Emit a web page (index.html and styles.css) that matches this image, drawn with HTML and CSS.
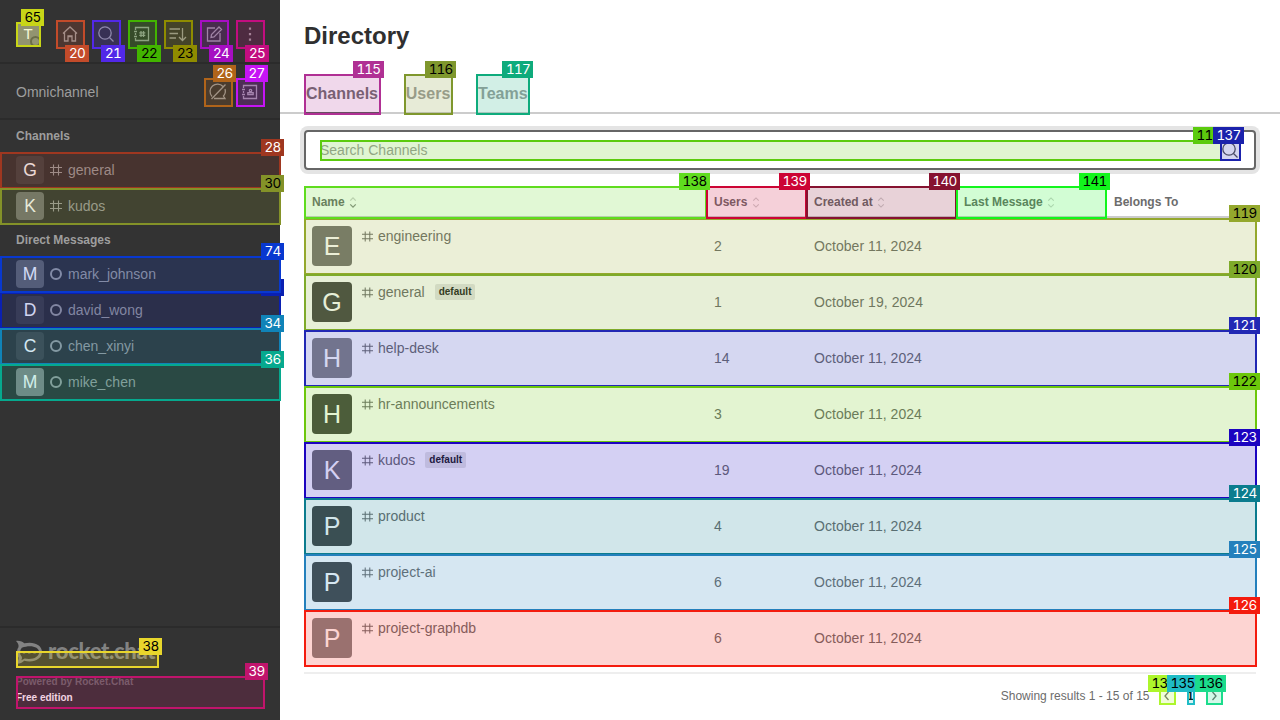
FILE: index.html
```html
<!DOCTYPE html>
<html lang="en">
<head>
<meta charset="utf-8">
<title>Directory</title>
<link rel="stylesheet" href="styles.css">
</head>
<body>
<svg class="defs" width="0" height="0">
  <symbol id="hash" viewBox="0 0 12 12"><path d="M3.500 .5v11M8.500 .5v11M0 3.500h12M0 8.500h12"/></symbol>
  <symbol id="search" viewBox="0 0 20 20"><circle cx="9" cy="9" r="6.2"/><path d="M13.500 13.500l4 4"/></symbol>
  <symbol id="sort" viewBox="0 0 8 12"><path class="up" d="M1 4l3-3 3 3"/><path class="down" d="M1 8l3 3 3-3"/></symbol>
</svg>
<div class="app">
  <aside class="sidebar">
    <header class="topbar">
      <div class="me">T<i class="status"></i><b class="mark m65"></b><em class="tag m65 dark">65</em></div>
      <div class="tools">
        <div class="btn"><svg viewBox="0 0 20 20"><path d="M3 9.500L10 3l7 6.500M4.500 8.500V17H8v-4.500h4V17h3.500V8.500M8 17v-5h4v5"/></svg><b class="mark m20"></b><em class="tag low m20">20</em></div>
        <div class="btn"><svg><use href="#search"/></svg><b class="mark m21"></b><em class="tag low m21">21</em></div>
        <div class="btn"><svg viewBox="0 0 20 20"><path d="M3.500 6V3.500h13v13h-13V14M3.500 9v2M2 7.500h3M2 12.500h3M9 7v6M11.500 7v6M7.300 8.800h6M7.300 11.300h6"/></svg><b class="mark m22"></b><em class="tag low m22 dark">22</em></div>
        <div class="btn"><svg viewBox="0 0 20 20"><path d="M1.500 5H12M1.500 9.500H10M1.500 14H8M14.500 4v12.500M11 13l3.500 3.500L18 13"/></svg><b class="mark m23"></b><em class="tag low m23 dark">23</em></div>
        <div class="btn"><svg viewBox="0 0 20 20"><path d="M11 4H3.500v13H16V9M7 13.500l.5-3L15 3l2.500 2.500L10 13z"/></svg><b class="mark m24"></b><em class="tag low m24">24</em></div>
        <div class="btn"><svg viewBox="0 0 20 20"><path class="dots" d="M10 4.500v.1M10 10v.1M10 15.500v.1"/></svg><b class="mark m25"></b><em class="tag low m25">25</em></div>
      </div>
    </header>
    <section class="omni">
      <span>Omnichannel</span>
      <div class="tools near">
        <div class="btn"><svg viewBox="0 0 20 20"><path d="M15 4.500A7.300 7.300 0 0 0 4 14.500M6 16.500h11l-1.500-2.500A7.500 7.500 0 0 0 17 7M3.500 17L17.500 2.500"/></svg><b class="mark m26"></b><em class="tag m26 dark-no">26</em></div>
        <div class="btn"><svg viewBox="0 0 20 20"><path d="M3.500 6V3.500h13v13h-13V14M3.500 9v2M2 7.500h3M2 12.500h3M7.800 12.500h5.400v-1.800H7.800z"/><circle cx="10.500" cy="8.500" r="1.200"/></svg><b class="mark m27"></b><em class="tag m27">27</em></div>
      </div>
    </section>
    <nav class="rooms">
      <h4>Channels</h4>
      <div class="room"><span class="av g43">G</span><svg class="hash"><use href="#hash"/></svg>general<b class="mark m28"></b><em class="tag m28">28</em></div>
      <div class="room"><span class="av g73">K</span><svg class="hash"><use href="#hash"/></svg>kudos<b class="mark m30"></b><em class="tag m30 dark">30</em></div>
      <h4>Direct Messages</h4>
      <div class="room front"><span class="av g65">M</span><i class="ring"></i>mark_johnson<b class="mark m74"></b><em class="tag m74">74</em></div>
      <div class="room back"><span class="av g43">D</span><i class="ring"></i>david_wong<b class="mark m32"></b><em class="tag m32">32</em></div>
      <div class="room"><span class="av g47">C</span><i class="ring"></i>chen_xinyi<b class="mark m34"></b><em class="tag m34">34</em></div>
      <div class="room"><span class="av g86">M</span><i class="ring"></i>mike_chen<b class="mark m36"></b><em class="tag m36">36</em></div>
    </nav>
    <footer class="brand">
      <div class="logo">
        <svg viewBox="0 0 28 26"><path class="fill" fill-rule="evenodd" d="M0 1C4 .5 7 2 8.500 3.500C18 1 27 5 27 12.500S18 24 8.500 21.500C6 24 3 25 0 24.500C2 22 3 20 2.500 18C.5 15 .5 10 2.500 7.500C3 5 2 3 0 1zM6 8C3.500 11 3.500 14.500 6 17.500C6.500 19 6 20 5.500 21L9 19.300C17 21 24 18 24 12.500S15 4.500 6 8z"/><path class="fill" d="M7 11.500h2.500v2.500H7zM12.500 11.500H15v2.500h-2.500zM18 11.500h2.500v2.500H18z"/></svg>
        <span>rocket.chat</span>
      </div>
      <div class="link"><b class="mark m38"></b><em class="tag m38 dark">38</em></div>
      <div class="edition"><p>Powered by Rocket.Chat</p><strong>Free edition</strong><b class="mark m39"></b><em class="tag m39">39</em></div>
    </footer>
  </aside>
  <main>
    <h1>Directory</h1>
    <div class="tabs">
      <div class="tab active">Channels<b class="mark m115"></b><em class="tag wide m115">115</em></div>
      <div class="tab">Users<b class="mark m116"></b><em class="tag wide m116 dark">116</em></div>
      <div class="tab">Teams<b class="mark m117"></b><em class="tag wide m117">117</em></div>
    </div>
    <div class="content">
      <div class="search">
        <div class="field">Search Channels<b class="mark m118"></b><em class="tag wide m118 dark">118</em></div>
        <div class="glass"><svg><use href="#search"/></svg><b class="mark m137"></b><em class="tag wide m137">137</em></div>
      </div>
      <div class="grid head">
        <div class="on">Name<svg><use href="#sort"/></svg><b class="mark m138"></b><em class="tag wide m138 dark">138</em></div>
        <div>Users<svg><use href="#sort"/></svg><b class="mark m139"></b><em class="tag wide m139">139</em></div>
        <div>Created at<svg><use href="#sort"/></svg><b class="mark m140"></b><em class="tag wide m140">140</em></div>
        <div>Last Message<svg><use href="#sort"/></svg><b class="mark m141"></b><em class="tag wide m141 dark">141</em></div>
        <div>Belongs To</div>
      </div>
      <div class="grid row"><div class="name"><span class="av big g73">E</span><p><svg class="hash"><use href="#hash"/></svg>engineering</p></div><div>2</div><div>October 11, 2024</div><b class="mark m119"></b><em class="tag wide m119 dark">119</em></div>
      <div class="grid row"><div class="name"><span class="av big g47">G</span><p><svg class="hash"><use href="#hash"/></svg>general<small>default</small></p></div><div>1</div><div>October 19, 2024</div><b class="mark m120"></b><em class="tag wide m120 dark">120</em></div>
      <div class="grid row"><div class="name"><span class="av big g86">H</span><p><svg class="hash"><use href="#hash"/></svg>help-desk</p></div><div>14</div><div>October 11, 2024</div><b class="mark m121"></b><em class="tag wide m121">121</em></div>
      <div class="grid row"><div class="name"><span class="av big g47">H</span><p><svg class="hash"><use href="#hash"/></svg>hr-announcements</p></div><div>3</div><div>October 11, 2024</div><b class="mark m122"></b><em class="tag wide m122 dark">122</em></div>
      <div class="grid row"><div class="name"><span class="av big g73">K</span><p><svg class="hash"><use href="#hash"/></svg>kudos<small>default</small></p></div><div>19</div><div>October 11, 2024</div><b class="mark m123"></b><em class="tag wide m123">123</em></div>
      <div class="grid row"><div class="name"><span class="av big g47">P</span><p><svg class="hash"><use href="#hash"/></svg>product</p></div><div>4</div><div>October 11, 2024</div><b class="mark m124"></b><em class="tag wide m124">124</em></div>
      <div class="grid row"><div class="name"><span class="av big g47">P</span><p><svg class="hash"><use href="#hash"/></svg>project-ai</p></div><div>6</div><div>October 11, 2024</div><b class="mark m125"></b><em class="tag wide m125">125</em></div>
      <div class="grid row"><div class="name"><span class="av big g86">P</span><p><svg class="hash"><use href="#hash"/></svg>project-graphdb</p></div><div>6</div><div>October 11, 2024</div><b class="mark m126"></b><em class="tag wide m126">126</em></div>
      <div class="pager">
        <span>Showing results 1 - 15 of 15</span>
        <div class="pg arrow"><svg viewBox="0 0 16 16"><path d="M9.500 4L6 8l3.500 4"/></svg><b class="mark m134"></b><em class="tag wide m134 dark">134</em></div>
        <div class="pg num">1<b class="mark m135"></b><em class="tag wide m135 dark">135</em></div>
        <div class="pg arrow"><svg viewBox="0 0 16 16"><path d="M6.500 4L10 8l-3.500 4"/></svg><b class="mark m136"></b><em class="tag wide m136 dark">136</em></div>
      </div>
    </div>
  </main>
</div>
</body>
</html>
```
FILE: styles.css
```css
* { box-sizing: border-box; }
body { margin: 0; font: 14px/20px "Liberation Sans", Arial, sans-serif; color: #6c6c6c; background: #fff; }
h1, h4, p { margin: 0; }
svg { display: block; fill: none; stroke: currentColor; stroke-width: 1.3; flex: none; }
.defs { position: absolute; }
.app { display: flex; width: 1280px; height: 720px; overflow: hidden; }

/* Numbered element markers */
.mark { position: absolute; inset: 0 -1px -1px 0; border: 2px solid var(--c); z-index: 1; }
.mark::before { content: ""; position: absolute; inset: 0; background: var(--c); opacity: .19; }
.tag { position: absolute; top: -13px; left: calc(100% - 19px); width: 23px; height: 17px; font: 13.5px/17px Inter, sans-serif; font-feature-settings: "tnum"; letter-spacing: -.8px; text-align: center; color: #fff; background: var(--c); z-index: 3; }
.tag.wide { left: calc(100% - 27px); width: 31px; }
.tag.low { top: auto; width: 24px; bottom: -14px; }
.tag.dark { color: #000; }
.m20 { --c: #c34b2a; } .m21 { --c: #5228e8; } .m22 { --c: #42b400; } .m23 { --c: #8f8c00; }
.m24 { --c: #a60ec2; } .m25 { --c: #c20d80; } .m26 { --c: #b0641a; } .m27 { --c: #c614f5; }
.m28 { --c: #9f3720; } .m30 { --c: #849228; } .m32 { --c: #0a20b2; } .m34 { --c: #1083b8; }
.m36 { --c: #06a98e; } .m38 { --c: #e8d62c; } .m39 { --c: #c0146c; } .m65 { --c: #c8d517; }
.m74 { --c: #0838d0; } .m115 { --c: #b03094; } .m116 { --c: #7f972d; } .m117 { --c: #0eab7c; }
.m118 { --c: #5bcb0e; } .m119 { --c: #94a82d; } .m120 { --c: #7eaa2a; } .m121 { --c: #2228b4; }
.m122 { --c: #6cc70b; } .m123 { --c: #1c04c0; } .m124 { --c: #0b7c8e; } .m125 { --c: #2480bc; }
.m126 { --c: #f41b0e; } .m134 { --c: #adf62c; } .m135 { --c: #1fbcc6; } .m136 { --c: #1cdc8c; }
.m137 { --c: #1b22ac; } .m138 { --c: #5fdc1e; } .m139 { --c: #cc0434; } .m140 { --c: #861230; }
.m141 { --c: #12f51c; }

/* Sidebar */
.sidebar { width: 280px; flex: none; display: flex; flex-direction: column; background: #333; color: #9e9e9e; }
.topbar { height: 64px; padding: 20px 16px 0; display: flex; justify-content: space-between; border-bottom: 2px solid #2b2b2b; }
.me { position: relative; width: 24px; height: 24px; margin-top: 2px; background: #858585; color: #fff; font-size: 15px; line-height: 23px; text-align: center; }
.status { position: absolute; right: -1px; bottom: -1px; width: 11px; height: 11px; border: 2px solid #555; border-radius: 50%; background: #888; }
.tools { display: flex; gap: 8px; }
.tools.near { gap: 4px; }
.btn { position: relative; width: 28px; height: 28px; padding: 4px; }
.btn svg { width: 20px; height: 20px; }
.dots { stroke-width: 2.2; stroke-linecap: square; }
.omni { height: 56px; padding: 2px 16px 0; display: flex; justify-content: space-between; align-items: center; border-bottom: 2px solid #2b2b2b; }
.rooms { flex: 1; }
h4 { height: 32px; padding-left: 16px; font-size: 12px; line-height: 32px; }
.room { position: relative; height: 36px; padding-left: 16px; display: flex; align-items: center; }
.room.back { z-index: 0; }
.room.front { z-index: 5; background: #333; }
.av { width: 28px; height: 28px; border-radius: 4px; display: block; flex: none; color: #fff; text-align: center; font-size: 17.5px; line-height: 28px; }
.av.big { width: 40px; height: 40px; font-size: 25px; line-height: 41px; }
.g43 { background: #434343; } .g47 { background: #464646; } .g65 { background: #656565; }
.g73 { background: #737373; } .g86 { background: #868686; }
.hash { width: 12px; height: 12px; margin: 0 6px; stroke-width: 1.1; }
.ring { width: 12px; height: 12px; flex: none; margin: 0 6px; border: 2px solid #9e9e9e; border-radius: 50%; }
.brand { height: 94px; padding: 12px 16px 0; border-top: 2px solid #2b2b2b; }
.logo { display: flex; height: 24px; color: #828282; }
.logo svg { width: 27px; height: 25px; }
.fill { fill: currentColor; stroke: none; }
.logo span { margin-left: 5px; font: 900 22px/22px Lato, sans-serif; letter-spacing: -.3px; }
.link { position: relative; width: 142px; height: 16px; margin-top: -13px; }
.edition { position: relative; height: 32px; margin-top: 9px; font-size: 10px; line-height: 12px; font-weight: bold; color: #6c6c6c; }
.edition strong { display: block; margin-top: 4px; color: #fff; }

/* Directory */
main { flex: 1; }
h1 { height: 74px; padding: 20px 24px 0; font-size: 24px; line-height: 32px; color: #2f2f2f; }
.tabs { display: flex; gap: 24px; height: 40px; padding-left: 24px; border-bottom: 2px solid #ccc; }
.tab { position: relative; height: 40px; padding: 0 1.8px 0 2px; font-size: 16px; line-height: 40px; font-weight: bold; color: #9e9e9e; border-bottom: 2px solid #ccc; }
.tab .mark { bottom: -3px; }
.tab.active { color: #6c6c6c; border-color: #555; }
.content { padding: 16px 24px 0; }
.search { display: flex; height: 40px; padding: 8px 14px 0; border: 2px solid #666; border-radius: 4px; box-shadow: 0 0 0 4px #e4e4e4; color: #9e9e9e; }
.field { position: relative; flex: 1; height: 20px; line-height: 20px; }
.field .mark { right: -2px; }
.glass { position: relative; width: 20px; height: 20px; color: #555; z-index: 4; }
.glass svg { width: 20px; height: 20px; }
.grid { position: relative; display: grid; grid-template-columns: 402px 100px 150px 150px 150px; }
.head { height: 32px; margin-top: 16px; font-size: 12px; line-height: 32px; font-weight: bold; border-bottom: 2px solid #ccc; }
.head > div { position: relative; height: 32px; padding-left: 8px; display: flex; align-items: center; }
.head svg { width: 8px; height: 11px; margin-left: 4.5px; color: #cfcfcf; stroke-width: 1.2; }
.head .on svg { --down: #8a8a8a; stroke-width: 1.4; }
.down { stroke: var(--down, currentColor); }
.head .mark { z-index: 2; }
.row { height: 56px; line-height: 56px; }
.row > div { padding-left: 8px; }
.row > div:nth-child(3) { letter-spacing: .05px; }
.row .name { display: flex; padding-top: 8px; line-height: 20px; }
.row p { display: flex; align-items: center; height: 20px; margin-left: 4px; }
.row .hash { width: 11px; height: 11px; margin-right: 5px; stroke-width: 1.1; }
small { height: 16px; margin-left: 10px; padding: 0 4px; border-radius: 2px; background: #e6e6e6; color: #222; font-size: 10px; line-height: 16px; font-weight: bold; }
.pager { display: flex; justify-content: flex-end; height: 50px; margin-top: 6px; padding: 14px 34px 0 0; border-top: 2px solid #eee; font-size: 12px; line-height: 16px; }
.pg { position: relative; width: 16px; height: 16px; margin-left: 9.5px; }
.pg svg { width: 16px; height: 16px; }
.num { width: 7px; margin-left: 12px; color: #000; font-weight: bold; }
.num + .arrow { margin-left: 12px; }
```
